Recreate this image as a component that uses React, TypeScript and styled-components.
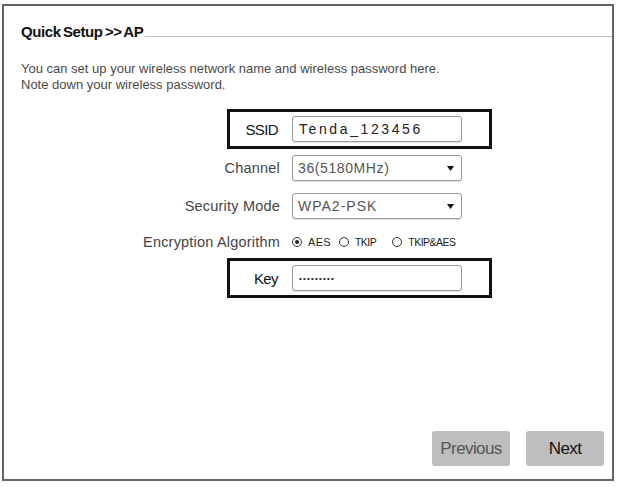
import React from "react";
import styled, { createGlobalStyle } from "styled-components";

const GlobalStyle = createGlobalStyle`
  html, body {
    margin: 0;
    padding: 0;
    background: #ffffff;
    font-family: "Liberation Sans", Arial, sans-serif;
  }
`;

const Panel = styled.div`
  box-sizing: border-box;
  width: 612px;
  height: 477px;
  margin: 4px 0 0 2px;
  border: 2px solid #666666;
  display: flex;
  flex-direction: column;
`;

const TitleRow = styled.div`
  display: flex;
  align-items: flex-end;
  padding: 18px 0 0 17px;
`;

const Title = styled.div`
  font-size: 15px;
  line-height: 16px;
  font-weight: bold;
  color: #111111;
  letter-spacing: -0.4px;
  word-spacing: -1.5px;
  white-space: nowrap;
`;

const TitleLine = styled.div`
  flex: 1;
  height: 1px;
  margin: 0 0 3px 2px;
  background: #bdbdbd;
`;

const Description = styled.p`
  margin: 21px 0 0 17px;
  font-size: 13px;
  line-height: 16px;
  color: #4a4a4a;
  letter-spacing: 0;
`;

const Form = styled.div`
  display: flex;
  flex-direction: column;
  margin: 16px 0 0 223px;
`;

const Row = styled.div<{ $boxed?: boolean; $h: number }>`
  box-sizing: border-box;
  display: flex;
  align-items: center;
  width: 265px;
  height: ${(p) => p.$h}px;
  border: 3px solid ${(p) => (p.$boxed ? "#111111" : "transparent")};
`;

const Label = styled.div<{ $strong?: boolean }>`
  flex: none;
  display: flex;
  justify-content: flex-end;
  width: ${(p) => (p.$strong ? 48 : 50)}px;
  margin-right: ${(p) => (p.$strong ? 14 : 12)}px;
  white-space: nowrap;
  font-size: ${(p) => (p.$strong ? 15 : 14.5)}px;
  color: ${(p) => (p.$strong ? "#111111" : "#444444")};
  letter-spacing: ${(p) => (p.$strong ? "-0.6px" : "0.2px")};
`;

const TextField = styled.input<{ $spacing?: number; $size?: number }>`
  box-sizing: border-box;
  width: 170px;
  height: 26px;
  margin: 0;
  padding: 0 6px;
  border: 1px solid #9a9a9a;
  border-radius: 3px;
  box-shadow: 0 1px 1px rgba(0, 0, 0, 0.12);
  font-family: "Liberation Sans", Arial, sans-serif;
  font-size: ${(p) => p.$size ?? 14}px;
  letter-spacing: ${(p) => p.$spacing ?? 0}px;
  color: #222222;
  background: #ffffff;
  outline: none;
`;

const SelectBox = styled.div`
  box-sizing: border-box;
  width: 170px;
  height: 26px;
  display: flex;
  align-items: center;
  justify-content: space-between;
  padding: 0 7px 0 5px;
  border: 1px solid #9a9a9a;
  border-radius: 3px;
  box-shadow: 0 1px 1px rgba(0, 0, 0, 0.12);
  background: #ffffff;
`;

const SelectText = styled.span<{ $spacing?: number }>`
  font-size: 14px;
  color: #555555;
  letter-spacing: ${(p) => p.$spacing ?? 0}px;
  white-space: nowrap;
`;

const RadioGroup = styled.div`
  display: flex;
  align-items: center;
  white-space: nowrap;
`;

const RadioOption = styled.label<{ $gap: number }>`
  display: flex;
  align-items: center;
  margin-right: ${(p) => p.$gap}px;
  font-size: 10px;
  color: #222222;
`;

const RadioMark = styled.span<{ $checked?: boolean }>`
  box-sizing: border-box;
  width: 10px;
  height: 10px;
  margin-right: 6px;
  border: 1px solid #333333;
  border-radius: 50%;
  display: flex;
  align-items: center;
  justify-content: center;
  &::after {
    content: "";
    width: 4px;
    height: 4px;
    border-radius: 50%;
    background: ${(p) => (p.$checked ? "#222222" : "transparent")};
  }
`;

const RadioText = styled.span<{ $condensed?: boolean }>`
  letter-spacing: ${(p) => (p.$condensed ? "-0.5px" : "0.3px")};
  font-size: ${(p) => (p.$condensed ? 10.5 : 11)}px;
`;

const ButtonBar = styled.div`
  margin-top: auto;
  display: flex;
  justify-content: flex-end;
  gap: 16px;
  padding: 0 8px 13px 0;
`;

const Button = styled.button<{ $disabled?: boolean }>`
  box-sizing: border-box;
  width: 78px;
  height: 35px;
  padding: 0;
  border: none;
  border-radius: 3px;
  background: #bebebe;
  font-family: "Liberation Sans", Arial, sans-serif;
  font-size: 17px;
  letter-spacing: -0.6px;
  color: ${(p) => (p.$disabled ? "#555555" : "#111111")};
`;

const Arrow = () => (
  <svg width="7" height="5" viewBox="0 0 7 5">
    <path d="M0 0 H7 L3.5 5 Z" fill="#111111" />
  </svg>
);

export default function App() {
  return (
    <>
      <GlobalStyle />
      <Panel>
        <TitleRow>
          <Title>Quick Setup &gt;&gt; AP</Title>
          <TitleLine />
        </TitleRow>
        <Description>
          You can set up your wireless network name and wireless password here.
          <br />
          Note down your wireless password.
        </Description>
        <Form>
          <Row $boxed $h={40}>
            <Label $strong>SSID</Label>
            <TextField readOnly defaultValue="Tenda_123456" $spacing={2.6} />
          </Row>
          <Row $h={38}>
            <Label>Channel</Label>
            <SelectBox>
              <SelectText $spacing={0.6}>36(5180MHz)</SelectText>
              <Arrow />
            </SelectBox>
          </Row>
          <Row $h={38}>
            <Label>Security Mode</Label>
            <SelectBox>
              <SelectText $spacing={1}>WPA2-PSK</SelectText>
              <Arrow />
            </SelectBox>
          </Row>
          <Row $h={33}>
            <Label>Encryption Algorithm</Label>
            <RadioGroup>
              <RadioOption $gap={8}>
                <RadioMark $checked />
                <RadioText>AES</RadioText>
              </RadioOption>
              <RadioOption $gap={16}>
                <RadioMark />
                <RadioText $condensed>TKIP</RadioText>
              </RadioOption>
              <RadioOption $gap={0}>
                <RadioMark />
                <RadioText $condensed>TKIP&amp;AES</RadioText>
              </RadioOption>
            </RadioGroup>
          </Row>
          <Row $boxed $h={40}>
            <Label $strong>Key</Label>
            <TextField readOnly defaultValue={"•••••••••"} $size={8} $spacing={1.2} />
          </Row>
        </Form>
        <ButtonBar>
          <Button $disabled>Previous</Button>
          <Button>Next</Button>
        </ButtonBar>
      </Panel>
    </>
  );
}
